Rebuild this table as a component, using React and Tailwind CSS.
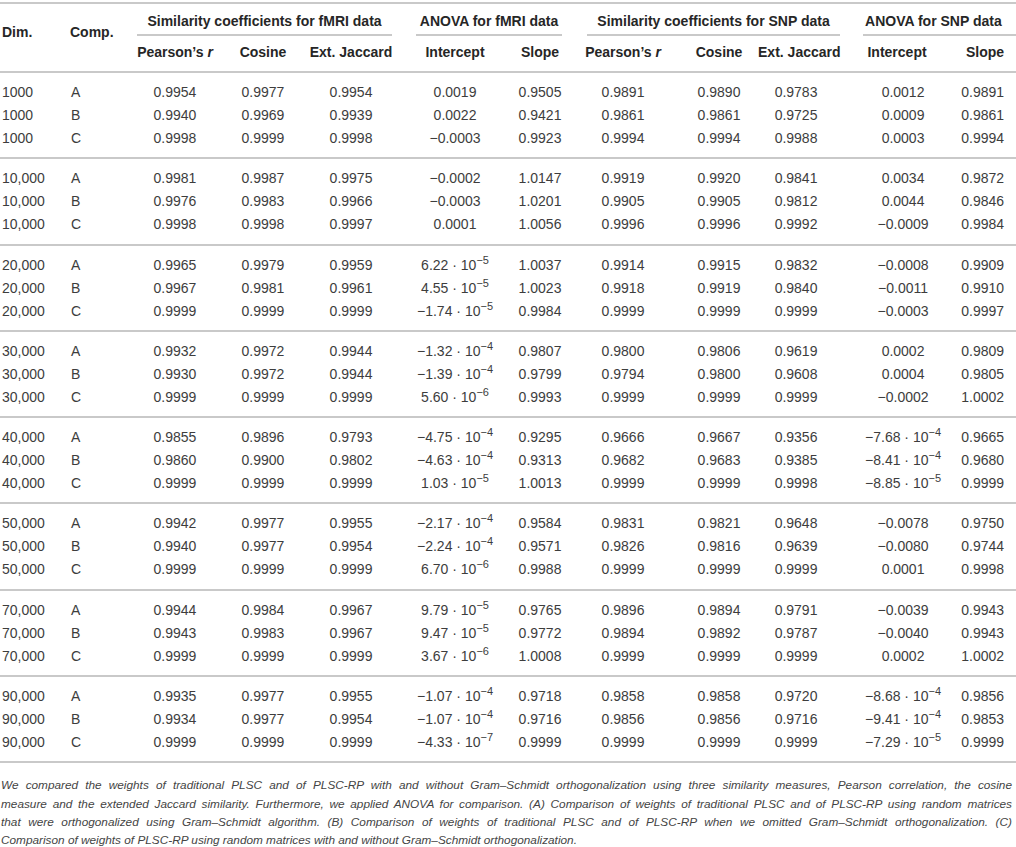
const rows = [
  ['1000', 'A', '0.9954', '0.9977', '0.9954', '0.0019', '0.9505', '0.9891', '0.9890', '0.9783', '0.0012', '0.9891'],
  ['1000', 'B', '0.9940', '0.9969', '0.9939', '0.0022', '0.9421', '0.9861', '0.9861', '0.9725', '0.0009', '0.9861'],
  ['1000', 'C', '0.9998', '0.9999', '0.9998', '−0.0003', '0.9923', '0.9994', '0.9994', '0.9988', '0.0003', '0.9994'],
  ['10,000', 'A', '0.9981', '0.9987', '0.9975', '−0.0002', '1.0147', '0.9919', '0.9920', '0.9841', '0.0034', '0.9872'],
  ['10,000', 'B', '0.9976', '0.9983', '0.9966', '−0.0003', '1.0201', '0.9905', '0.9905', '0.9812', '0.0044', '0.9846'],
  ['10,000', 'C', '0.9998', '0.9998', '0.9997', '0.0001', '1.0056', '0.9996', '0.9996', '0.9992', '−0.0009', '0.9984'],
  ['20,000', 'A', '0.9965', '0.9979', '0.9959', '6.22|−5', '1.0037', '0.9914', '0.9915', '0.9832', '−0.0008', '0.9909'],
  ['20,000', 'B', '0.9967', '0.9981', '0.9961', '4.55|−5', '1.0023', '0.9918', '0.9919', '0.9840', '−0.0011', '0.9910'],
  ['20,000', 'C', '0.9999', '0.9999', '0.9999', '−1.74|−5', '0.9984', '0.9999', '0.9999', '0.9999', '−0.0003', '0.9997'],
  ['30,000', 'A', '0.9932', '0.9972', '0.9944', '−1.32|−4', '0.9807', '0.9800', '0.9806', '0.9619', '0.0002', '0.9809'],
  ['30,000', 'B', '0.9930', '0.9972', '0.9944', '−1.39|−4', '0.9799', '0.9794', '0.9800', '0.9608', '0.0004', '0.9805'],
  ['30,000', 'C', '0.9999', '0.9999', '0.9999', '5.60|−6', '0.9993', '0.9999', '0.9999', '0.9999', '−0.0002', '1.0002'],
  ['40,000', 'A', '0.9855', '0.9896', '0.9793', '−4.75|−4', '0.9295', '0.9666', '0.9667', '0.9356', '−7.68|−4', '0.9665'],
  ['40,000', 'B', '0.9860', '0.9900', '0.9802', '−4.63|−4', '0.9313', '0.9682', '0.9683', '0.9385', '−8.41|−4', '0.9680'],
  ['40,000', 'C', '0.9999', '0.9999', '0.9999', '1.03|−5', '1.0013', '0.9999', '0.9999', '0.9998', '−8.85|−5', '0.9999'],
  ['50,000', 'A', '0.9942', '0.9977', '0.9955', '−2.17|−4', '0.9584', '0.9831', '0.9821', '0.9648', '−0.0078', '0.9750'],
  ['50,000', 'B', '0.9940', '0.9977', '0.9954', '−2.24|−4', '0.9571', '0.9826', '0.9816', '0.9639', '−0.0080', '0.9744'],
  ['50,000', 'C', '0.9999', '0.9999', '0.9999', '6.70|−6', '0.9988', '0.9999', '0.9999', '0.9999', '0.0001', '0.9998'],
  ['70,000', 'A', '0.9944', '0.9984', '0.9967', '9.79|−5', '0.9765', '0.9896', '0.9894', '0.9791', '−0.0039', '0.9943'],
  ['70,000', 'B', '0.9943', '0.9983', '0.9967', '9.47|−5', '0.9772', '0.9894', '0.9892', '0.9787', '−0.0040', '0.9943'],
  ['70,000', 'C', '0.9999', '0.9999', '0.9999', '3.67|−6', '1.0008', '0.9999', '0.9999', '0.9999', '0.0002', '1.0002'],
  ['90,000', 'A', '0.9935', '0.9977', '0.9955', '−1.07|−4', '0.9718', '0.9858', '0.9858', '0.9720', '−8.68|−4', '0.9856'],
  ['90,000', 'B', '0.9934', '0.9977', '0.9954', '−1.07|−4', '0.9716', '0.9856', '0.9856', '0.9716', '−9.41|−4', '0.9853'],
  ['90,000', 'C', '0.9999', '0.9999', '0.9999', '−4.33|−7', '0.9999', '0.9999', '0.9999', '0.9999', '−7.29|−5', '0.9999'],
];

const widths = [68, 62, 90, 86, 90, 118, 52, 114, 78, 76, 126, 56];

// alignment per column (body)
const align = [
  'text-left pl-[2px]',
  'text-left pl-[3px]',
  'text-center',
  'text-center',
  'text-center',
  'text-center',
  'text-center',
  'text-center',
  'text-center',
  'text-center',
  'text-center pl-[12px]',
  'text-right pr-[12px]',
];

// alignment for the sub headers (Pearson ... Slope)
const headAlign = [
  'text-center',
  'text-center',
  'text-center',
  'text-center',
  'text-center',
  'text-center',
  'text-center',
  'text-center',
  'text-center',
  'text-right pr-[12px]',
];

const footnote = [
  'We compared the weights of traditional PLSC and of PLSC-RP with and without Gram–Schmidt orthogonalization using three similarity measures, Pearson correlation, the cosine',
  'measure and the extended Jaccard similarity. Furthermore, we applied ANOVA for comparison. (A) Comparison of weights of traditional PLSC and of PLSC-RP using random matrices',
  'that were orthogonalized using Gram–Schmidt algorithm. (B) Comparison of weights of traditional PLSC and of PLSC-RP when we omitted Gram–Schmidt orthogonalization. (C)',
  'Comparison of weights of PLSC-RP using random matrices with and without Gram–Schmidt orthogonalization.',
];

const Value = ({ v }) => {
  if (!v.includes('|')) return v;
  const [m, e] = v.split('|');
  return (
    <>
      {m} · 10<sup className="text-[11px] top-[-0.55em]">{e}</sup>
    </>
  );
};

const rule = 'border-[#c9c9c9]';

export default function App() {
  const groups = [];
  for (let i = 0; i < rows.length; i += 3) groups.push(rows.slice(i, i + 3));

  return (
    <div className="w-[1016px] min-h-[847px] bg-white pt-[2px] font-['Liberation_Sans',Arial,sans-serif] text-[14px] text-[#3d3d3d]">
      <table className={`w-[1016px] table-fixed border-collapse border-t-2 ${rule}`}>
        <colgroup>
          {widths.map((w, i) => (
            <col key={i} style={{ width: w }} />
          ))}
        </colgroup>
        <thead className="font-bold text-[#262626]">
          <tr>
            <th rowSpan={2} className={`text-left align-top pl-[2px] pt-[18px] leading-[20px] font-bold border-b-2 ${rule}`}>Dim.</th>
            <th rowSpan={2} className={`text-left align-top pl-[2px] pt-[18px] leading-[20px] font-bold border-b-2 ${rule}`}>Comp.</th>
            <th colSpan={3} className="p-0 font-bold">
              <div className={`ml-[7px] mr-[4px] pt-[7px] pb-[3px] leading-[20px] text-center whitespace-nowrap border-b-2 ${rule}`}>
                Similarity coefficients for fMRI data
              </div>
            </th>
            <th colSpan={2} className="p-0 font-bold">
              <div className={`ml-[20px] mr-[4px] pt-[7px] pb-[3px] leading-[20px] text-center whitespace-nowrap border-b-2 ${rule}`}>
                ANOVA for fMRI data
              </div>
            </th>
            <th colSpan={3} className="p-0 font-bold">
              <div className={`ml-[21px] mr-[-6px] pt-[7px] pb-[3px] leading-[20px] text-center whitespace-nowrap border-b-2 ${rule}`}>
                Similarity coefficients for SNP data
              </div>
            </th>
            <th colSpan={2} className="p-0 font-bold">
              <div className={`ml-[29px] pt-[7px] pb-[3px] pl-[2px] leading-[20px] text-left whitespace-nowrap border-b-2 ${rule}`}>
                ANOVA for SNP data
              </div>
            </th>
          </tr>
          <tr>
            {['Pearson', 'Cosine', 'Ext. Jaccard', 'Intercept', 'Slope', 'Pearson', 'Cosine', 'Ext. Jaccard', 'Intercept', 'Slope'].map((h, i) => (
              <th
                key={i}
                className={`${headAlign[i]} pt-[6px] pb-[9px] leading-[20px] font-bold whitespace-nowrap border-b-2 ${rule}`}
              >
                {h === 'Pearson' ? (
                  <>
                    Pearson’s <i>r</i>
                  </>
                ) : (
                  h
                )}
              </th>
            ))}
          </tr>
        </thead>
        {groups.map((g, gi) => (
          <tbody key={gi}>
            {g.map((r, ri) => (
              <tr key={ri}>
                {r.map((v, ci) => (
                  <td
                    key={ci}
                    className={`${align[ci]} leading-[23px] whitespace-nowrap ${
                      ri === 0 ? 'pt-[8px]' : ''
                    } ${ri === 2 ? `pb-[7.3px] border-b-2 ${rule}` : ''}`}
                  >
                    <Value v={v} />
                  </td>
                ))}
              </tr>
            ))}
          </tbody>
        ))}
      </table>
      <div className="mt-[13px] pl-[1px] pr-[4px] text-[11.8px] italic leading-[18.3px] text-[#444]">
        {footnote.map((line, i) => (
          <div key={i} className={i < 3 ? 'text-justify [text-align-last:justify]' : ''}>
            {line}
          </div>
        ))}
      </div>
    </div>
  );
}
